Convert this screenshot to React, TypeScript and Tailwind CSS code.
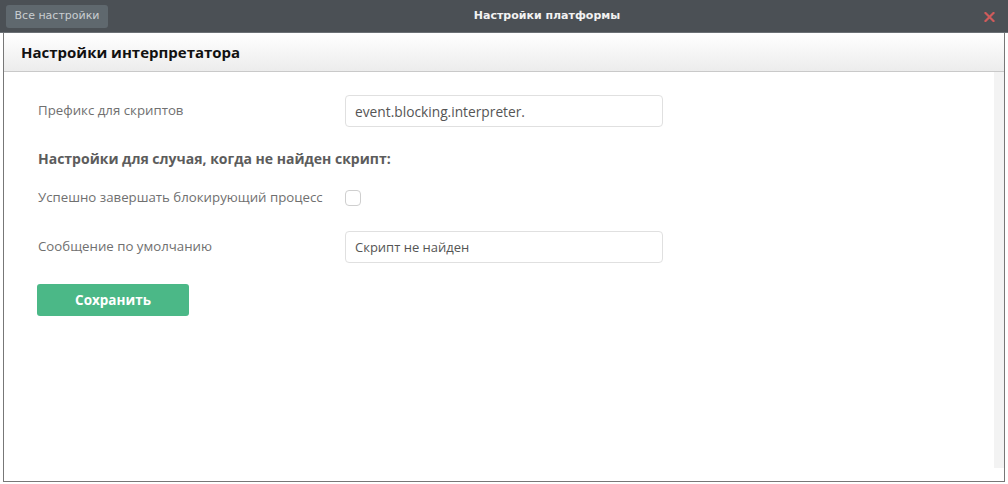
import React, { useState } from 'react';

const Row: React.FC<{ label: string; className?: string; children: React.ReactNode }> = ({ label, className, children }) => (
  <div className={`flex items-center ${className || ''}`}>
    <div className="w-[307px] shrink-0 text-[13.25px] text-[#707070]">{label}</div>
    {children}
  </div>
);

export default function App() {
  const [prefix, setPrefix] = useState('event.blocking.interpreter.');
  const [message, setMessage] = useState('Скрипт не найден');
  const [finish, setFinish] = useState(false);

  return (
    <div className="w-[1008px] h-[484px] bg-white flex flex-col overflow-hidden" style={{ fontFamily: '"Open Sans", sans-serif' }}>
      {/* top bar */}
      <div
        className="relative h-[33px] shrink-0 bg-[#4b5055] border-b border-[#6b7075] flex items-center px-[6px]"
        style={{ fontFamily: '"DejaVu Sans", sans-serif' }}
      >
        <button className="h-[23px] w-[102px] rounded-[3px] bg-[#5f686e] text-[11px] text-[#c9ced1]">Все настройки</button>
        <div className="absolute inset-x-0 top-0 h-[32px] flex items-center justify-center text-[11px] font-bold text-[#f2f2f2] pointer-events-none pl-[86px]">
          Настройки платформы
        </div>
        <button className="ml-auto mr-[7px] mt-[1px]">
          <svg width="11" height="10" viewBox="0 0 11 10">
            <path d="M1.5 1 L9.5 9 M9.5 1 L1.5 9" stroke="#cf5b5b" strokeWidth="2.2" strokeLinecap="square" />
          </svg>
        </button>
      </div>

      {/* frame */}
      <div className="mx-[3px] mb-[2px] flex-1 flex flex-col border-x border-b border-[#777] min-h-0">
        <div className="h-[39px] shrink-0 bg-gradient-to-b from-white to-[#ececec] border-b border-[#c9c9c9] flex items-center pl-[17px] text-[15px] font-bold text-[#111]">
          Настройки интерпретатора
        </div>
        <div className="flex-1 flex min-h-0 pb-[13px]">
          <div className="flex-1 pl-[34px] pt-[23px]">
            <Row label="Префикс для скриптов" className="h-[32px]">
              <input
                value={prefix}
                onChange={(e) => setPrefix(e.target.value)}
                className="w-[318px] h-[32px] border border-[#e0e0e0] rounded-[4px] px-[9px] text-[13.75px] text-[#555] outline-none"
              />
            </Row>
            <div className="mt-[21px] h-[20px] flex items-center text-[14px] font-bold text-[#5c5c5c]">
              Настройки для случая, когда не найден скрипт:
            </div>
            <Row label="Успешно завершать блокирующий процесс" className="mt-[20px] h-[20px]">
              <button
                onClick={() => setFinish(!finish)}
                className="w-[16px] h-[16px] rounded-[4px] border border-[#cfcfcf] bg-white"
              />
            </Row>
            <Row label="Сообщение по умолчанию" className="mt-[23px] h-[32px]">
              <input
                value={message}
                onChange={(e) => setMessage(e.target.value)}
                className="w-[318px] h-[32px] border border-[#e0e0e0] rounded-[4px] px-[9px] text-[13px] text-[#555] outline-none"
              />
            </Row>
            <button className="mt-[21px] -ml-[1px] w-[152px] h-[32px] rounded-[3px] bg-[#4bb887] text-white text-[13.5px] font-bold">
              Сохранить
            </button>
          </div>
          <div className="w-[10px] shrink-0 bg-[#f3f3f3]" />
        </div>
      </div>
    </div>
  );
}
